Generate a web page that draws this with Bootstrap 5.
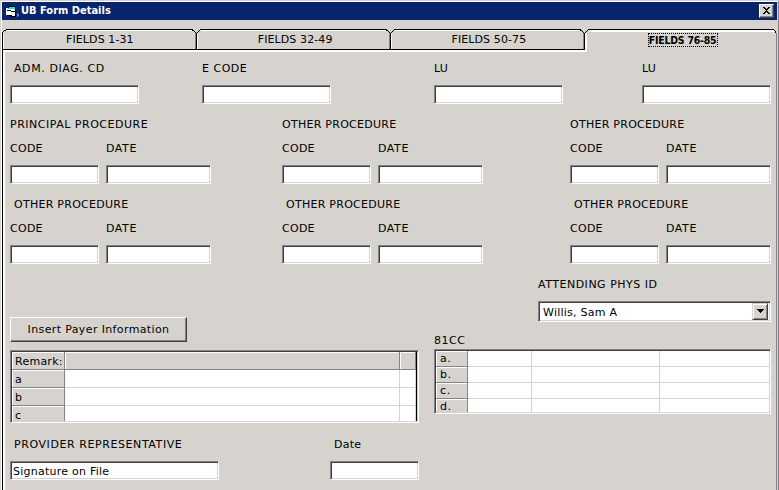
<!DOCTYPE html>
<html lang="en">
<head>
<meta charset="utf-8">
<meta name="viewport" content="width=device-width, initial-scale=1">
<title>UB Form Details</title>
<link href="https://cdn.jsdelivr.net/npm/bootstrap@5.3.0/dist/css/bootstrap.min.css" rel="stylesheet">
<style>
:root{--face:#d6d3ce;--shade:#848284;--dark:#424142}
body{background:var(--face);color:#000;font:11px/16px "DejaVu Sans",Verdana,sans-serif;overflow:hidden}
.win{width:779px;height:490px;border-left:1px solid var(--face);border-right:1px solid var(--shade)}
.win-inner{border-left:1px solid #fff;border-top:1px solid #fff;border-right:1px solid var(--face);margin-top:1px}
.titlebar{height:18px;background:#08246b;color:#fff;padding-left:3px;padding-right:3px}
.win-title{font:bold 11px/18px "DejaVu Sans Condensed","DejaVu Sans",sans-serif;margin-left:2px}
.closebtn{width:15px;height:14px;background:var(--face);border:1px solid;border-color:#fff var(--dark) var(--dark) #fff;box-shadow:inset -1px -1px 0 var(--shade);border-radius:0;line-height:0}
.tabstrip{height:23px;margin-top:9px}
.tabframe{left:0;top:0}
.tab-item{width:194px;height:21px;line-height:21px;letter-spacing:.1px;background:none;border:0;padding:0 0 0 5px;color:#000;white-space:nowrap}
.tab-item:first-child{padding-left:2px}
.tab-item.active{font:bold 10.5px/12px "DejaVu Sans Condensed","DejaVu Sans",sans-serif;letter-spacing:-.25px;padding-top:1px}
.tab-item.active span{display:block;margin:0 auto;border:1px dotted #000;width:70px;height:14px;line-height:13px}
.panel{height:438px;border-left:1px solid #000;border-right:1px solid var(--shade);box-shadow:inset 2px 0 0 #fff;padding:9px 5px 0 7px}
.lbl{display:block;height:16px;white-space:nowrap;letter-spacing:.27px}
.lbl.wide{letter-spacing:.51px}
.lbl.wider{letter-spacing:.58px}
.sunk{border:1px solid;border-color:var(--shade) #fff #fff var(--shade);box-shadow:inset 1px 1px 0 var(--dark),inset -1px -1px 0 var(--face);border-radius:0;background:#fff}
input.form-control.sunk{height:19px;min-height:0;font:inherit;color:#000;padding:1px 2px 0 2px;letter-spacing:.24px}
input.form-control.sunk:focus{box-shadow:inset 1px 1px 0 var(--dark),inset -1px -1px 0 var(--face)}
.w-top{width:129px}.w-code{width:89px}.w-sig{width:209px}
.top-row{display:grid;grid-template-columns:192px 232px 208px 129px;row-gap:8px}
.proc-row{display:grid;grid-template-columns:272px 288px 201px;margin-top:13px}
.proc-pair{display:grid;grid-template-columns:89px 105px;column-gap:7px;row-gap:8px;margin-top:8px}
.indent{padding-left:4px}
.phys{width:233px;margin-top:1px}
.combo{height:21px;padding:1px 2px 1px 1px;margin-top:8px}
.combo-text{padding-left:3px;line-height:19px;letter-spacing:.25px}
.combo-btn{width:16px;height:17px;background:var(--face);border:1px solid;border-color:var(--face) var(--dark) var(--dark) var(--face);box-shadow:inset 1px 1px 0 #fff,inset -1px -1px 0 var(--shade);padding:0 0 2px;line-height:0}
.btn.push{width:177px;height:25px;border-radius:0;background:var(--face);border:1px solid;border-color:#fff var(--dark) var(--dark) #fff;box-shadow:inset -1px -1px 0 var(--shade);padding:0;font:inherit;letter-spacing:.37px;color:#000;margin-top:41px}
.gridbox{overflow:hidden;padding:1px}
.remarks{width:409px;height:73px;margin-top:8px}
.cc{width:337px;height:65px}
.cc-title{margin-top:11px}
.g-remarks{display:grid;grid-template-columns:53px 335px 16px;grid-auto-rows:18px;height:69px;width:405px;border-right:1px solid #000;overflow:hidden}
.g-cc{display:grid;grid-template-columns:32px 64px 128px 109px;grid-template-rows:16px 16px 16px 13px;height:61px}
.g-head{background:var(--face);border-right:1px solid var(--shade);border-bottom:1px solid var(--shade);box-shadow:inset 1px 1px 0 #fff;padding-left:3px;white-space:nowrap}
.g-cell{border-right:1px solid var(--face);border-bottom:1px solid var(--face);background:#fff}
.g-remarks .g-head{line-height:19px;letter-spacing:.25px}
.g-cc .g-head{line-height:16px;letter-spacing:.6px;padding-left:4px}
.g-cc .g-cell:nth-child(4n){border-right:0}
.g-cc>:nth-child(n+13){border-bottom:0}
.lower{height:208px;margin-top:12px}
.sign-row{margin-top:14px}
.sign-row input.form-control.sunk{margin-top:8px}
</style>
<script src="https://cdn.jsdelivr.net/npm/bootstrap@5.3.0/dist/js/bootstrap.bundle.min.js"></script>
</head>
<body>
<div class="win">
 <div class="win-inner">
  <header class="titlebar d-flex align-items-center">
   <svg width="14" height="14" viewBox="0 0 14 14" shape-rendering="crispEdges" aria-hidden="true">
    <path d="M3 2h8v11H6v-1H2V5h1z" fill="#000"/><path d="M4 3h6v1H4z" fill="#00e5e5"/>
    <path d="M1 4h2v1h7v7H7v-1H1z" fill="#fff"/><path d="M3 4h7v1H3z" fill="#00e5e5"/><path d="M2 6h4v1H2zM6 7h4v1H6z" fill="#000"/>
    <path d="M12 9h1v1h1v2h-1v1h-1z" fill="#848284"/>
   </svg>
   <span class="win-title">UB Form Details</span>
   <button type="button" class="closebtn ms-auto p-0" aria-label="Close">
    <svg width="9" height="8" viewBox="0 0 9 8" shape-rendering="crispEdges"><path d="M1 0h2v1h1v1h1V1h1V0h2v1H7v1H6v1H5v1h1v1h1v1h1v1H6V6H5V5H4v1H3v1H1V6h1V5h1V4h1V3H3V2H2V1H1z"/></svg>
   </button>
  </header>
  <nav class="tabstrip position-relative">
   <svg class="tabframe position-absolute" width="776" height="23" viewBox="0 0 776 23" shape-rendering="crispEdges" aria-hidden="true">
    <g fill="none" stroke="#fff" stroke-width="1">
     <path d="M1.5 20V4.500M5 1.500H190M195.500 20V4M199 1.500H384M389.500 20V4M393 1.500H578"/>
     <path d="M1 21.500H583M1 22.500H583M583.500 23V4M584.500 23V3.500M587 1.500H772M587 2.500H772"/>
    </g>
    <g fill="none" stroke="#848284"><path d="M193.500 20V4M387.500 20V4M581.500 20V4M774.500 23V4"/></g>
    <g fill="none" stroke="#000">
     <path d="M0 20.500H583M.5 23V3M4 .5H191M194.500 21V4M198 .5H385M388.500 21V4M392 .5H579M582.500 21V4M586 .5H772"/>
    </g>
    <path d="M1 2h1v1H1zM2 1h2v1H2zM190 1h2v1h-2zM192 2h1v1h-1zM193 3h1v1h-1zM195 3h1v1h-1zM196 2h1v1h-1zM197 1h1v1h-1zM384 1h2v1h-2zM386 2h1v1h-1zM387 3h1v1h-1zM389 3h1v1h-1zM390 2h1v1h-1zM391 1h1v1h-1zM578 1h2v1h-2zM580 2h1v1h-1zM581 3h1v1h-1zM583 3h1v1h-1zM584 2h1v1h-1zM585 1h1v1h-1zM772 1h1v1h-1zM773 2h1v2h-1z"/>
   </svg>
   <div class="d-flex position-relative align-items-start">
    <button class="tab-item" type="button">FIELDS 1-31</button>
    <button class="tab-item" type="button">FIELDS 32-49</button>
    <button class="tab-item" type="button">FIELDS 50-75</button>
    <button class="tab-item active" type="button"><span>FIELDS 76-85</span></button>
   </div>
  </nav>
  <main class="panel">
   <div class="top-row">
    <label class="lbl wider indent">ADM. DIAG. CD</label><label class="lbl wide">E CODE</label><label class="lbl">LU</label><label class="lbl">LU</label>
    <input class="form-control sunk w-top"><input class="form-control sunk w-top"><input class="form-control sunk w-top"><input class="form-control sunk w-top">
   </div>
   <div class="proc-row">
    <section><span class="lbl wide">PRINCIPAL PROCEDURE</span><div class="proc-pair"><label class="lbl">CODE</label><label class="lbl wider">DATE</label><input class="form-control sunk"><input class="form-control sunk"></div></section>
    <section><span class="lbl">OTHER PROCEDURE</span><div class="proc-pair"><label class="lbl">CODE</label><label class="lbl wider">DATE</label><input class="form-control sunk"><input class="form-control sunk"></div></section>
    <section><span class="lbl">OTHER PROCEDURE</span><div class="proc-pair"><label class="lbl">CODE</label><label class="lbl wider">DATE</label><input class="form-control sunk"><input class="form-control sunk"></div></section>
   </div>
   <div class="proc-row">
    <section><span class="lbl indent">OTHER PROCEDURE</span><div class="proc-pair"><label class="lbl">CODE</label><label class="lbl wider">DATE</label><input class="form-control sunk"><input class="form-control sunk"></div></section>
    <section><span class="lbl indent">OTHER PROCEDURE</span><div class="proc-pair"><label class="lbl">CODE</label><label class="lbl wider">DATE</label><input class="form-control sunk"><input class="form-control sunk"></div></section>
    <section><span class="lbl indent">OTHER PROCEDURE</span><div class="proc-pair"><label class="lbl">CODE</label><label class="lbl wider">DATE</label><input class="form-control sunk"><input class="form-control sunk"></div></section>
   </div>
   <div class="lower d-flex justify-content-between">
    <div class="d-flex flex-column">
     <button type="button" class="btn push">Insert Payer Information</button>
     <div class="sunk gridbox remarks">
      <div class="g-remarks">
       <div class="g-head">Remark:</div><div class="g-head"></div><div class="g-head"></div>
       <div class="g-head">a</div><div class="g-cell"></div><div class="g-cell"></div>
       <div class="g-head">b</div><div class="g-cell"></div><div class="g-cell"></div>
       <div class="g-head">c</div><div class="g-cell"></div><div class="g-cell"></div>
      </div>
     </div>
     <div class="sign-row d-flex justify-content-between">
      <div><label class="lbl wider indent">PROVIDER REPRESENTATIVE</label><input class="form-control sunk w-sig" value="Signature on File"></div>
      <div><label class="lbl indent">Date</label><input class="form-control sunk w-code"></div>
     </div>
    </div>
    <div class="d-flex flex-column">
     <div class="phys ms-auto">
      <label class="lbl wide">ATTENDING PHYS ID</label>
      <div class="combo sunk d-flex"><span class="flex-grow-1 combo-text">Willis, Sam A</span>
       <button type="button" class="combo-btn" aria-label="Open list"><svg width="7" height="4" viewBox="0 0 7 4" shape-rendering="crispEdges"><path d="M0 0h7v1H6v1H5v1H4v1H3V3H2V2H1V1H0z"/></svg></button></div>
     </div>
     <span class="lbl wide cc-title">81CC</span>
     <div class="sunk gridbox cc">
      <div class="g-cc">
       <div class="g-head">a.</div><div class="g-cell"></div><div class="g-cell"></div><div class="g-cell"></div>
       <div class="g-head">b.</div><div class="g-cell"></div><div class="g-cell"></div><div class="g-cell"></div>
       <div class="g-head">c.</div><div class="g-cell"></div><div class="g-cell"></div><div class="g-cell"></div>
       <div class="g-head">d.</div><div class="g-cell"></div><div class="g-cell"></div><div class="g-cell"></div>
      </div>
     </div>
    </div>
   </div>
  </main>
 </div>
</div>
</body>
</html>
